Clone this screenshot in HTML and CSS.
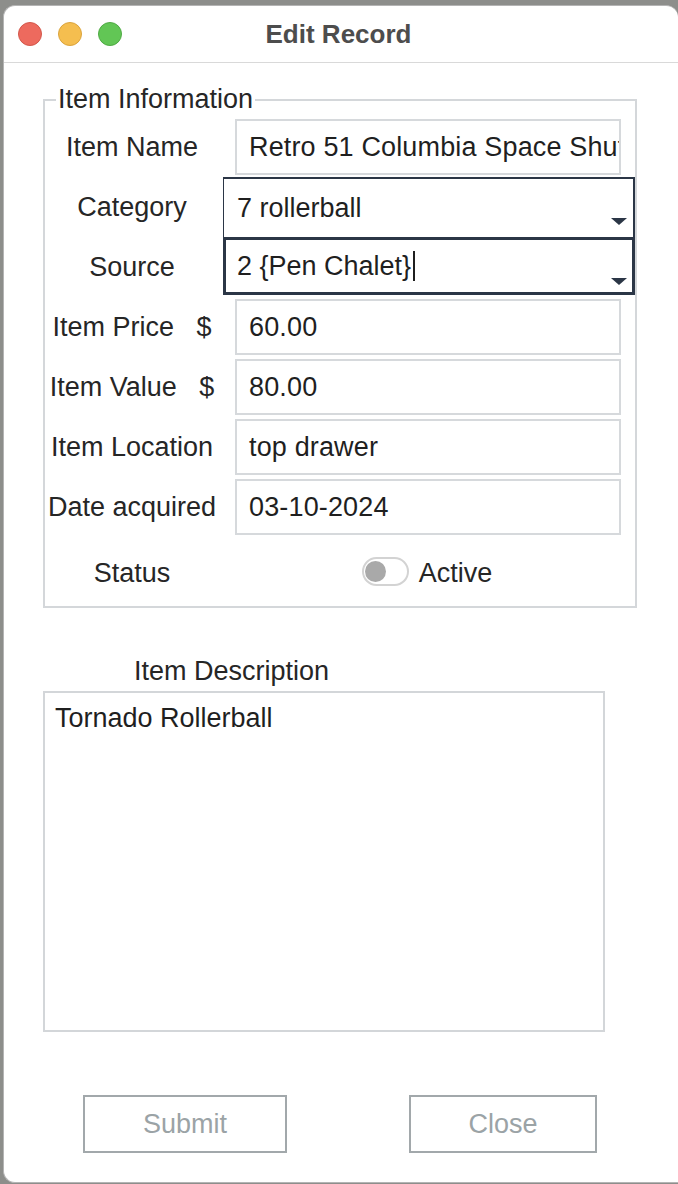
FILE: index.html
```html
<!DOCTYPE html>
<html lang="en">
<head>
<meta charset="utf-8">
<title>Edit Record</title>
<link rel="stylesheet" href="styles.css">
</head>
<body>
<div class="window">
  <div class="titlebar">
    <div class="lights">
      <span class="light red"></span>
      <span class="light yellow"></span>
      <span class="light green"></span>
    </div>
    <div class="title">Edit Record</div>
    <div></div>
  </div>
  <div class="content">
    <div class="group">
      <div class="group-title">Item Information</div>
      <div class="form">
        <div class="label">Item Name</div>
        <div class="cell"><div class="field">Retro 51 Columbia Space Shuttle</div></div>

        <div class="label">Category</div>
        <div class="cell"><div class="combo">7 rollerball<span class="arrow"></span></div></div>

        <div class="label">Source</div>
        <div class="cell"><div class="combo focused">2 {Pen Chalet}<span class="caret"></span><span class="arrow"></span></div></div>

        <div class="label">Item Price   $</div>
        <div class="cell"><div class="field">60.00</div></div>

        <div class="label">Item Value   $</div>
        <div class="cell"><div class="field">80.00</div></div>

        <div class="label">Item Location</div>
        <div class="cell"><div class="field">top drawer</div></div>

        <div class="label">Date acquired</div>
        <div class="cell"><div class="field">03-10-2024</div></div>
      </div>
      <div class="status">
        <div class="label">Status</div>
        <div class="toggle-wrap">
          <span class="toggle"><span class="knob"></span></span>
          <span class="toggle-text">Active</span>
        </div>
      </div>
    </div>

    <div class="desc-label">Item Description</div>
    <div class="desc">Tornado Rollerball</div>

    <div class="buttons">
      <div class="btn submit">Submit</div>
      <div class="btn close">Close</div>
    </div>
  </div>
</div>
</body>
</html>
```

FILE: styles.css
```css
html, body {
  margin: 0;
  padding: 0;
  background: #8d8e8b;
  font-family: "Liberation Sans", Arial, sans-serif;
  overflow: hidden;
}

.window {
  margin: 5px 0 0 3px;
  height: 1178px;
  box-sizing: border-box;
  background: #ffffff;
  border: 1px solid #b4b4b4;
  border-right: none;
  border-radius: 12px 12px 0 12px;
  overflow: hidden;
}

.titlebar {
  height: 57px;
  box-sizing: border-box;
  border-bottom: 1px solid #d9d9d9;
  display: grid;
  grid-template-columns: 1fr auto 1fr;
  align-items: center;
  padding: 0 19px 0 14px;
}

.lights {
  display: flex;
  gap: 16px;
}

.light {
  width: 24px;
  height: 24px;
  border-radius: 50%;
  box-sizing: border-box;
}

.red { background: #ed6a5e; border: 1px solid #d3574b; }
.yellow { background: #f5be4f; border: 1px solid #dba43d; }
.green { background: #62c655; border: 1px solid #4faa44; }

.title {
  font-weight: bold;
  font-size: 26px;
  color: #4d4d4d;
}

.content {
  padding-left: 39px;
}

.group {
  position: relative;
  margin-top: 36px;
  width: 594px;
  box-sizing: border-box;
  border: 2px solid #d4d7da;
  padding-top: 16px;
}

.group-title {
  position: absolute;
  top: -18px;
  left: 11px;
  padding: 0 2px;
  background: #ffffff;
  font-size: 27px;
  line-height: 32px;
  color: #262626;
}

.form {
  display: grid;
  grid-template-columns: 174px 416px;
  grid-auto-rows: 60px;
}

.label {
  display: flex;
  align-items: center;
  justify-content: center;
  white-space: pre;
  font-size: 27px;
  color: #262626;
}

.field {
  margin: 2px 0 0 16px;
  width: 386px;
  height: 56px;
  box-sizing: border-box;
  border: 2px solid #d6d9dc;
  padding-left: 12px;
  display: flex;
  align-items: center;
  overflow: hidden;
  white-space: nowrap;
  font-size: 27px;
  letter-spacing: 0.15px;
  color: #1f1f1f;
}

.combo {
  position: relative;
  margin-left: 4px;
  height: 60px;
  box-sizing: border-box;
  border-top: 2px solid #2b3646;
  border-left: 1px solid #2b3646;
  border-right: 2px solid #2b3646;
  padding-left: 13px;
  display: flex;
  align-items: center;
  white-space: nowrap;
  font-size: 27px;
  color: #1f1f1f;
}

.combo.focused {
  height: 58px;
  border: 3px solid #2b3646;
  padding-left: 11px;
}

.arrow {
  position: absolute;
  right: 6px;
  bottom: 12px;
  width: 0;
  height: 0;
  border-left: 8px solid transparent;
  border-right: 8px solid transparent;
  border-top: 7px solid #2b3646;
}

.combo.focused .arrow {
  right: 5px;
  bottom: 7px;
}

.caret {
  display: inline-block;
  width: 2px;
  height: 30px;
  margin-left: 2px;
  background: #1f1f1f;
}

.status {
  display: grid;
  grid-template-columns: 174px 416px;
  height: 69px;
  box-sizing: border-box;
  padding-top: 3px;
}

.toggle-wrap {
  display: flex;
  align-items: center;
  justify-content: center;
  gap: 10px;
}

.toggle {
  display: flex;
  align-items: center;
  width: 47px;
  height: 29px;
  box-sizing: border-box;
  border: 2px solid #d3d3d3;
  border-radius: 15px;
  padding-left: 1px;
  margin-top: -3px;
}

.knob {
  width: 21px;
  height: 21px;
  border-radius: 50%;
  background: #a9a9a9;
}

.toggle-text {
  font-size: 27px;
  color: #262626;
}

.desc-label {
  margin: 47px 0 0 91px;
  font-size: 27px;
  line-height: 32px;
  color: #262626;
}

.desc {
  margin-top: 4px;
  width: 562px;
  height: 341px;
  box-sizing: border-box;
  border: 2px solid #d3d6d9;
  padding: 9px 0 0 10px;
  font-size: 27px;
  line-height: 32px;
  color: #1f1f1f;
}

.buttons {
  display: flex;
  margin-top: 63px;
}

.btn {
  height: 58px;
  box-sizing: border-box;
  border: 2px solid #a2a8ab;
  display: flex;
  align-items: center;
  justify-content: center;
  font-size: 27px;
  color: #9ba3a6;
}

.submit {
  margin-left: 40px;
  width: 204px;
}

.close {
  margin-left: 122px;
  width: 188px;
}
```
